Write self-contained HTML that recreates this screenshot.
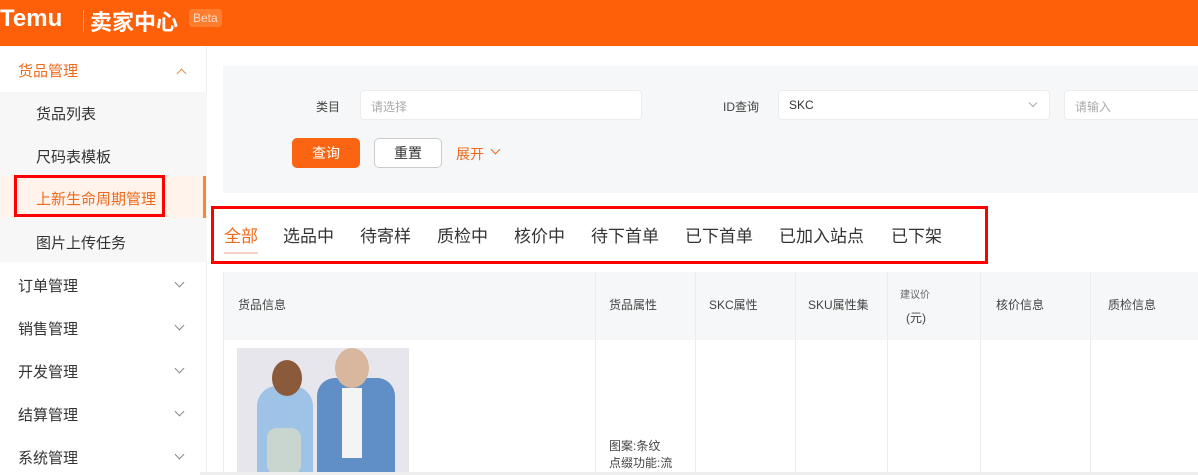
<!DOCTYPE html>
<html><head><meta charset="utf-8"><style>
*{margin:0;padding:0;box-sizing:border-box}
body{width:1198px;height:475px;overflow:hidden;background:#fff;font-family:"Liberation Sans","Noto Sans CJK SC",sans-serif;position:relative;color:#333}
.a{position:absolute;white-space:nowrap}
.hdr{left:0;top:0;width:1198px;height:46px;background:#fd6009}
.side{left:0;top:46px;width:207px;height:429px;background:#fff;border-right:1px solid #eee}
.mi{left:18px;font-size:15px;color:#333}
.chev{left:176px;width:7px;height:7px;border-right:1.5px solid #888;border-bottom:1.5px solid #888;transform:rotate(45deg)}
.inp{background:#fff;border:1px solid #ececec;border-radius:4px;height:30px;font-size:12px;color:#aaa;padding:7px 10px}
.tab{top:222px;font-size:17px;color:#333}
.th{top:296px;font-size:12px;color:#444}
.vl{top:272px;width:1px;height:203px;background:#ececec}
</style></head><body>
<div class="a hdr"></div>
<div class="a" style="left:0;top:5px;font-size:24px;font-weight:bold;color:#fff">Temu</div>
<div class="a" style="left:83px;top:10px;width:1px;height:22px;background:#ff9b5e"></div>
<div class="a" style="left:90px;top:5px;font-size:22px;color:#fff;font-weight:bold">卖家中心</div>
<div class="a" style="left:189px;top:9px;font-size:12px;color:#ffd9c2;background:#ff7d2e;padding:2px 4px;border-radius:3px">Beta</div>

<div class="a side"></div>
<div class="a" style="left:0;top:92px;width:207px;height:170px;background:#f7f7f7"></div>
<div class="a mi" style="top:60px;color:#f06a1e">货品管理</div>
<div class="a" style="left:178px;top:70px;width:7px;height:7px;border-left:1.5px solid #f08a50;border-top:1.5px solid #f08a50;transform:rotate(45deg)"></div>
<div class="a mi" style="left:36px;top:103px">货品列表</div>
<div class="a mi" style="left:36px;top:146px">尺码表模板</div>
<div class="a" style="left:0;top:176px;width:207px;height:42px;background:#fff3ec"></div>
<div class="a" style="left:203px;top:176px;width:3px;height:42px;background:#f8863f"></div>
<div class="a mi" style="left:36px;top:188px;color:#f06a1e">上新生命周期管理</div>
<div class="a" style="left:14px;top:175px;width:151px;height:42px;border:3px solid #f00"></div>
<div class="a mi" style="left:36px;top:232px">图片上传任务</div>
<div class="a mi" style="top:275px">订单管理</div><div class="a chev" style="top:279px"></div>
<div class="a mi" style="top:318px">销售管理</div><div class="a chev" style="top:322px"></div>
<div class="a mi" style="top:361px">开发管理</div><div class="a chev" style="top:365px"></div>
<div class="a mi" style="top:404px">结算管理</div><div class="a chev" style="top:408px"></div>
<div class="a mi" style="top:447px">系统管理</div><div class="a chev" style="top:451px"></div>

<div class="a" style="left:223px;top:66px;width:975px;height:127px;background:#f6f7f8"></div>
<div class="a" style="left:316px;top:98px;font-size:12px;color:#444">类目</div>
<div class="a inp" style="left:360px;top:90px;width:282px">请选择</div>
<div class="a" style="left:723px;top:98px;font-size:12px;color:#444">ID查询</div>
<div class="a inp" style="left:778px;top:90px;width:272px;color:#333">SKC</div>
<div class="a" style="left:1030px;top:100px;width:6px;height:6px;border-right:1px solid #aaa;border-bottom:1px solid #aaa;transform:rotate(45deg)"></div>
<div class="a inp" style="left:1064px;top:90px;width:150px">请输入</div>
<div class="a" style="left:292px;top:138px;width:68px;height:30px;background:#fb6412;border-radius:5px;color:#fff;font-size:14px;text-align:center;line-height:30px">查询</div>
<div class="a" style="left:374px;top:138px;width:68px;height:30px;background:#fff;border:1px solid #ccc;border-radius:5px;color:#333;font-size:14px;text-align:center;line-height:28px">重置</div>
<div class="a" style="left:456px;top:144px;font-size:14px;color:#f06a1e">展开</div>
<div class="a" style="left:492px;top:146px;width:7px;height:7px;border-right:1.5px solid #f06a1e;border-bottom:1.5px solid #f06a1e;transform:rotate(45deg)"></div>

<div class="a tab" style="left:224px;color:#f06a1e">全部</div>
<div class="a" style="left:224px;top:252px;width:34px;height:2px;background:#f3d3c0"></div>
<div class="a tab" style="left:283px">选品中</div>
<div class="a tab" style="left:360px">待寄样</div>
<div class="a tab" style="left:437px">质检中</div>
<div class="a tab" style="left:514px">核价中</div>
<div class="a tab" style="left:591px">待下首单</div>
<div class="a tab" style="left:685px">已下首单</div>
<div class="a tab" style="left:779px">已加入站点</div>
<div class="a tab" style="left:891px">已下架</div>
<div class="a" style="left:211px;top:206px;width:777px;height:58px;border:3px solid #f00"></div>

<div class="a" style="left:223px;top:272px;width:975px;height:68px;background:#f6f7f8"></div>
<div class="a" style="left:223px;top:272px;width:1px;height:203px;background:#ececec"></div>
<div class="a vl" style="left:595px"></div><div class="a vl" style="left:695px"></div><div class="a vl" style="left:795px"></div><div class="a vl" style="left:887px"></div><div class="a vl" style="left:980px"></div><div class="a vl" style="left:1090px"></div>
<div class="a th" style="left:238px">货品信息</div>
<div class="a th" style="left:609px">货品属性</div>
<div class="a th" style="left:709px">SKC属性</div>
<div class="a th" style="left:808px">SKU属性集</div>
<div class="a" style="left:900px;top:286px;font-size:10px;color:#666">建议价</div>
<div class="a th" style="left:906px;top:309px">(元)</div>
<div class="a th" style="left:996px">核价信息</div>
<div class="a th" style="left:1108px">质检信息</div>
<div class="a" style="left:237px;top:348px;width:172px;height:127px;background:#e6e6ec;overflow:hidden">
<div class="a" style="left:20px;top:38px;width:56px;height:90px;background:#9ec3e6;border-radius:20px 20px 0 0"></div>
<div class="a" style="left:35px;top:12px;width:30px;height:36px;background:#8a5a3a;border-radius:50%"></div>
<div class="a" style="left:80px;top:30px;width:78px;height:97px;background:#5f8fc6;border-radius:18px 18px 0 0"></div>
<div class="a" style="left:105px;top:40px;width:20px;height:70px;background:#f4f4f4"></div>
<div class="a" style="left:98px;top:0;width:34px;height:40px;background:#d9b79e;border-radius:50%"></div>
<div class="a" style="left:30px;top:80px;width:34px;height:47px;background:#c9d6cf;border-radius:10px"></div>
</div>
<div class="a" style="left:609px;top:438px;font-size:12px;color:#444;line-height:17px">图案:条纹<br>点缀功能:流</div>
<div class="a" style="left:200px;top:472px;width:998px;height:3px;background:#eee"></div>
</body></html>
